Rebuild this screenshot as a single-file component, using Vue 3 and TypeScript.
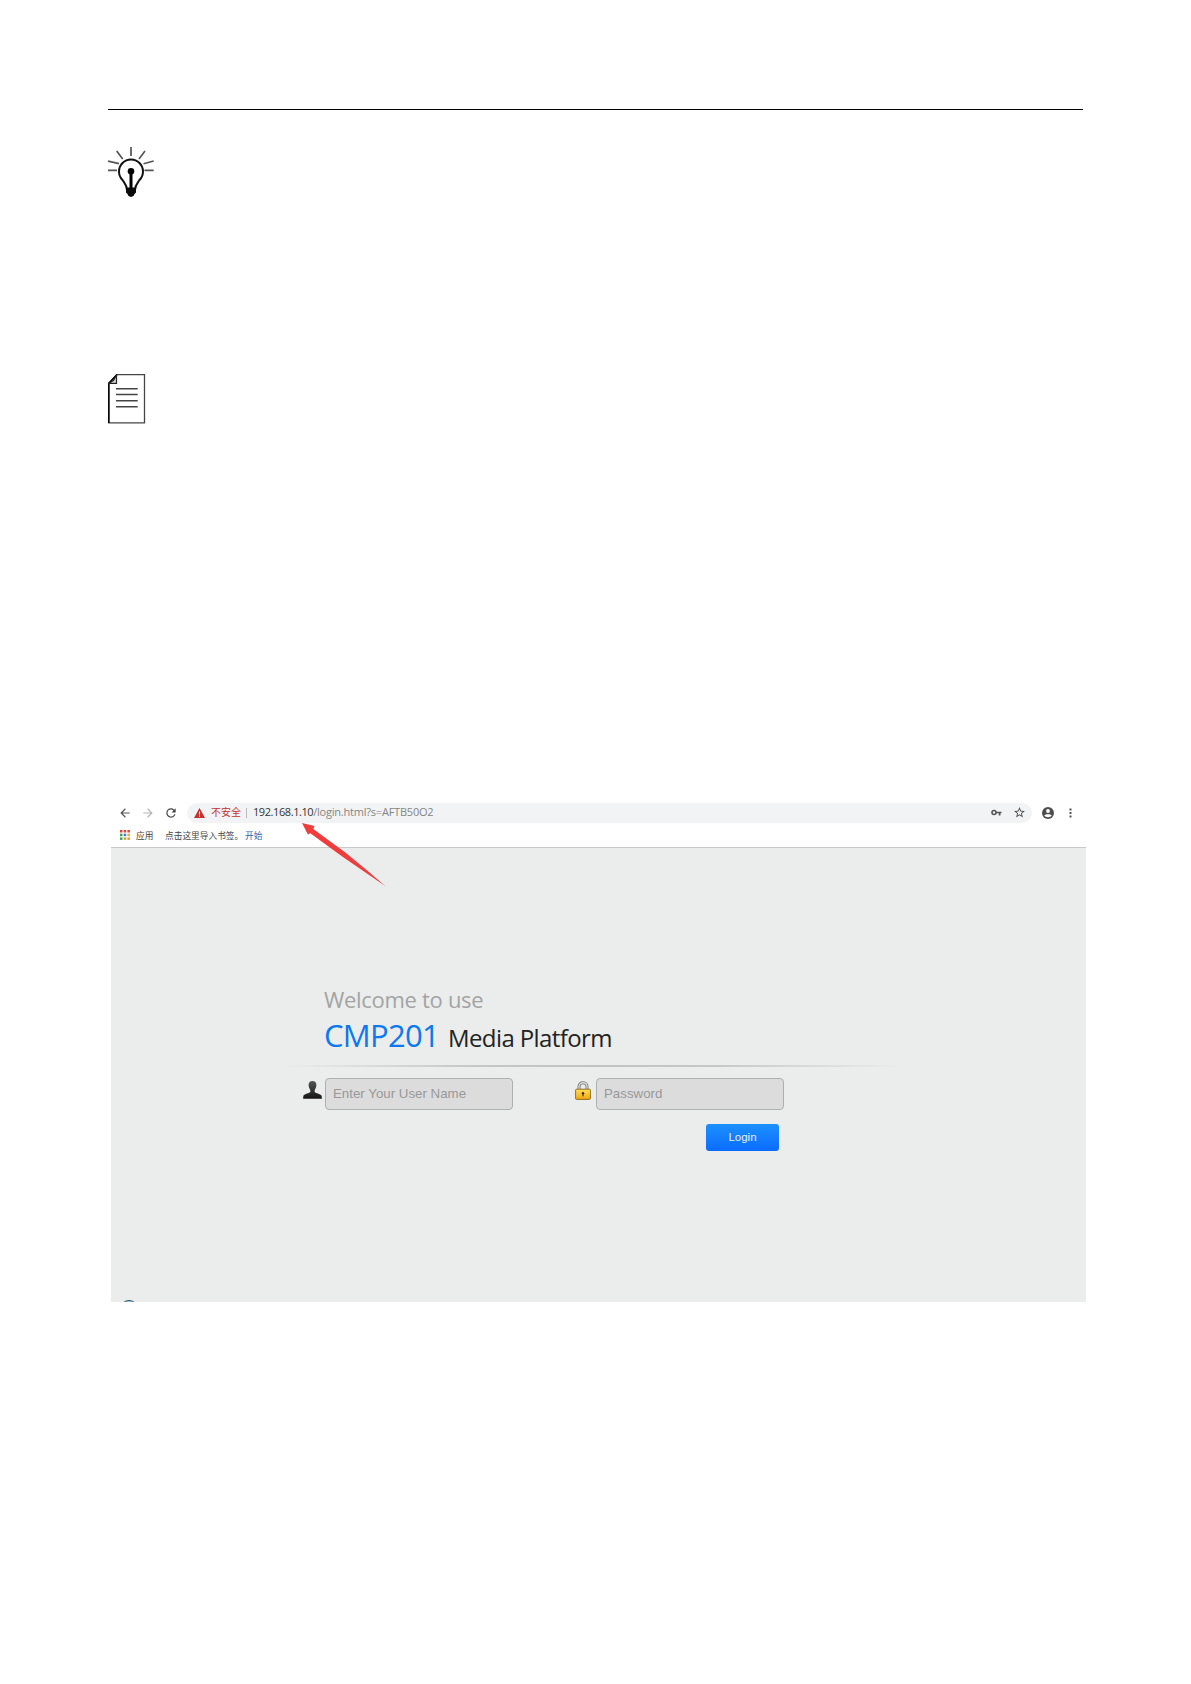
<script setup lang="ts">
import { ref } from 'vue'

const username = ref('')
const password = ref('')
const host = '192.168.1.10'
const path = '/login.html?s=AFTB50O2'

const appColors = [
  '#e0473c', '#e0473c', '#e0473c',
  '#3f9f58', '#4179d8', '#e0b030',
  '#3f9f58', '#d8a030', '#d8a030'
]
</script>

<template>
  <div class="page">
    <div class="rule"></div>

    <svg class="icon-tip" viewBox="0 0 46 50" fill="none">
      <g stroke="#555" stroke-width="1.7">
        <path d="M23 0v9M8.7 4l6 8M37 4l-6 8M0 14l11 2.7M45.7 14l-10.2 2.8M0 23.3h9M36.5 23.3h9.2" />
      </g>
      <path d="M19 43c0-5-2.500-7-4.500-10A12 12 0 1 1 31.500 33C29.500 36 27 38 27 43" stroke="#111" stroke-width="2" />
      <circle cx="23" cy="24.300" r="3.300" fill="#000" />
      <path d="M23 24v18" stroke="#000" stroke-width="3" />
      <path d="M18 40.500h10v5l-1.500 1.500-1 2-2.500 1-2.500-1-1-2-1.500-1.500z" fill="#0a0a0a" />
    </svg>

    <svg class="icon-note" viewBox="0 0 38 50" fill="none">
      <path d="M9 .6H36.500V48.900H.8V9.300z" stroke="#444" stroke-width="1.300" />
      <path d="M.8 48.900V9.300L9 .6" stroke="#000" stroke-width="1.500" />
      <path d="M.8 9.300H8.500V.8L5.700 6.300z" fill="#ddd" stroke="#222" stroke-width="1.200" />
      <path d="M8 14.700h21.700M8 20.500h21.700M8 26.700h21.700M8 32.700h21.700" stroke="#444" stroke-width="1.600" />
    </svg>

    <div class="browser">
      <div class="toolbar">
        <svg class="nav-icon" viewBox="0 0 24 24" fill="#555">
          <path d="M20 11H7.830l5.590-5.590L12 4l-8 8 8 8 1.410-1.410L7.830 13H20z" />
        </svg>
        <svg class="nav-icon" viewBox="0 0 24 24" fill="#b5b5b5">
          <path d="M4 11h12.170l-5.590-5.590L12 4l8 8-8 8-1.410-1.410L16.170 13H4z" />
        </svg>
        <svg class="nav-icon" viewBox="0 0 24 24" fill="#444">
          <path d="M17.650 6.350A8 8 0 1 0 19.730 14h-2.080A6 6 0 1 1 12 6c1.660 0 3.140.69 4.220 1.780L13 11h7V4z" />
        </svg>
        <div class="address">
          <svg class="warn" viewBox="0 0 11 10">
            <path d="M5.500 0L11 10H0z" fill="#c5302c" />
            <path d="M5.500 3.500v3M5.500 7.500v1.200" stroke="#fff" stroke-width="1.100" />
          </svg>
          <span class="unsafe">不安全</span>
          <span class="sep"></span>
          <span class="host">{{ host }}</span><span class="path">{{ path }}</span>
          <svg class="key" viewBox="0 0 11 8">
            <circle cx="3" cy="3.500" r="2" fill="none" stroke="#555" stroke-width="1.600" />
            <path d="M5 3.500h5.500M8.600 3.500v3" stroke="#555" stroke-width="1.700" fill="none" />
          </svg>
          <svg class="star" viewBox="0 0 24 24" fill="#4a4a4a">
            <path d="M22 9.240l-7.190-.62L12 2 9.190 8.630 2 9.240l5.460 4.730L5.820 21 12 17.270 18.180 21l-1.630-7.030zM12 15.400l-3.760 2.270 1-4.280-3.320-2.880 4.380-.38L12 6.100l1.710 4.040 4.380.38-3.320 2.880 1 4.280z" />
          </svg>
        </div>
        <svg class="avatar" viewBox="0 0 12 12">
          <circle cx="6" cy="6" r="6" fill="#4d4d4d" />
          <circle cx="6" cy="4" r="1.900" fill="#fff" />
          <path d="M2.300 8.600C3.600 6.700 8.400 6.700 9.700 8.600 8.300 10.800 3.700 10.800 2.300 8.600z" fill="#fff" />
        </svg>
        <svg class="more" viewBox="0 0 3 10" fill="#555">
          <path d="M.5.5h2v2h-2zM.5 4h2v2h-2zM.5 7.500h2v2h-2z" />
        </svg>
      </div>

      <div class="bookmarks">
        <svg class="apps" viewBox="0 0 10 10">
          <rect
            v-for="(color, i) in appColors"
            :key="i"
            :x="(i % 3) * 3.7"
            :y="Math.floor(i / 3) * 3.7"
            width="2.5"
            height="2.5"
            :fill="color"
          />
        </svg>
        <span class="apps-label">应用</span>
        <span class="hint">点击这里导入书签。</span>
        <a class="start">开始</a>
      </div>

      <div class="viewport">
        <div class="login">
          <div class="welcome">Welcome to use</div>
          <div class="title"><span class="model">CMP201</span><span class="product">Media Platform</span></div>
          <div class="divider"></div>
          <div class="fields">
            <svg class="user" viewBox="0 0 19 18">
              <defs>
                <linearGradient id="person" x1="0" y1="0" x2="0" y2="1">
                  <stop offset="0" stop-color="#555" />
                  <stop offset="1" stop-color="#151515" />
                </linearGradient>
              </defs>
              <path d="M9.500 0C12 0 13.500 1.500 13.400 4.300 13.300 6.500 12.400 8 11.700 9v2c1.300 1.500 6.500 1.700 7 4.200l.2 2.600H.1l.2-2.600C.8 12.700 6 12.500 7.300 11V9C6.600 8 5.700 6.500 5.600 4.300 5.500 1.500 7 0 9.500 0z" fill="url(#person)" />
            </svg>
            <input v-model="username" type="text" placeholder="Enter Your User Name">
            <svg class="lock" viewBox="0 0 16 19">
              <defs>
                <linearGradient id="gold" x1="0" y1="0" x2="0" y2="1">
                  <stop offset="0" stop-color="#ffe05a" />
                  <stop offset="1" stop-color="#f0a514" />
                </linearGradient>
              </defs>
              <path d="M4 9V5.500C4 .5 12 .5 12 5.500V9" fill="none" stroke="#777" stroke-width="3" />
              <path d="M4 9V5.500C4 .5 12 .5 12 5.500V9" fill="none" stroke="#ddd" stroke-width="1.300" />
              <rect x=".6" y="8.200" width="14.800" height="10.200" rx="1" fill="url(#gold)" stroke="#94711f" />
              <circle cx="8" cy="12.300" r="1.200" fill="#402c00" />
              <path d="M8 12v3.300" stroke="#402c00" stroke-width="1.100" />
            </svg>
            <input v-model="password" type="password" placeholder="Password">
          </div>
          <button class="login-btn">Login</button>
        </div>
        <div class="bubble"></div>
      </div>

      <svg class="arrow" viewBox="0 0 84 64">
        <path d="M0 0L12.500 3 11.300 6 43 29.200 64 46.500 83.500 63.300 62 48.500 39.500 33 8.300 10.300 5.900 11.500z" fill="#f03c3c" />
      </svg>
    </div>
  </div>
</template>

<style>
body {
  margin: 0;
  background: #fff;
}
</style>

<style scoped>
.page {
  box-sizing: border-box;
  width: 1191px;
  height: 1684px;
  padding: 109px 105px 0 108px;
  overflow: hidden;
  background: #fff;
  font-family: "Open Sans", "Noto Sans CJK SC", sans-serif;
}
.page svg {
  display: block;
  flex: none;
}
.rule {
  width: 975px;
  height: 1px;
  background: #000;
}
.icon-tip {
  width: 46px;
  height: 50px;
  margin-top: 37px;
}
.icon-note {
  width: 38px;
  height: 50px;
  margin-top: 177px;
}
.browser {
  position: relative;
  width: 975px;
  margin: 375px 0 0 3px;
}
.toolbar {
  display: flex;
  align-items: center;
  height: 27px;
  padding-left: 7px;
}
.nav-icon {
  width: 14px;
  height: 14px;
  margin-right: 9px;
}
.address {
  display: flex;
  align-items: center;
  box-sizing: border-box;
  width: 845px;
  height: 20px;
  padding: 0 6px 0 7px;
  border-radius: 10px;
  background: #f1f3f4;
  font-size: 11px;
  white-space: nowrap;
}
.warn {
  width: 11px;
  height: 10px;
}
.unsafe {
  width: 30px;
  margin-left: 6px;
  padding-bottom: 2px;
  color: #c5302c;
  font-size: 10px;
}
.sep {
  width: 1px;
  height: 10px;
  margin: 0 6px 0 5px;
  background: #bbb;
}
.host,
.path {
  padding-bottom: 2px;
}
.host {
  color: #333;
  letter-spacing: -0.42px;
}
.path {
  color: #858585;
  letter-spacing: -0.22px;
}
.key {
  width: 11px;
  height: 8px;
  margin-left: auto;
}
.star {
  width: 13px;
  height: 13px;
  margin-left: 11px;
}
.avatar {
  width: 12px;
  height: 12px;
  margin-left: 10px;
}
.more {
  width: 3px;
  height: 10px;
  margin-left: 15px;
}
.bookmarks {
  display: flex;
  align-items: center;
  box-sizing: border-box;
  height: 22px;
  padding: 0 0 3px 9px;
  border-bottom: 1px solid #c8caca;
  color: #444;
  font-size: 8.7px;
  white-space: nowrap;
}
.apps {
  width: 10px;
  height: 10px;
}
.apps-label {
  width: 18px;
  margin-left: 6px;
}
.hint {
  width: 80px;
  margin-left: 11px;
}
.start {
  color: #2a63a8;
}
.viewport {
  position: relative;
  box-sizing: border-box;
  height: 454px;
  padding: 136px 0 0 172px;
  overflow: hidden;
  background: #ebedec;
}
.login {
  width: 620px;
}
.welcome {
  height: 31px;
  padding-left: 41px;
  color: #a2a4a3;
  font-size: 22px;
  line-height: 30px;
  letter-spacing: -0.3px;
}
.title {
  display: flex;
  align-items: baseline;
  height: 40px;
  padding-left: 41px;
  line-height: 40px;
  white-space: nowrap;
}
.model {
  width: 124px;
  color: #0e78f0;
  font-size: 31px;
  letter-spacing: -0.7px;
}
.product {
  color: #222;
  font-size: 24px;
  letter-spacing: -0.6px;
}
.divider {
  height: 2px;
  margin-top: 10px;
  background: linear-gradient(90deg, transparent, #c6c8c7 30%, #c0c2c1 50%, #c6c8c7 70%, transparent);
}
.fields {
  display: flex;
  align-items: flex-start;
  padding: 11px 0 0 20px;
}
.fields input {
  box-sizing: border-box;
  width: 188px;
  height: 32px;
  padding: 0 7px 2px;
  border: 1px solid #aeb0b0;
  border-radius: 4px;
  outline: none;
  background: #dcdcdc;
  font: 13.3px "Liberation Sans", sans-serif;
}
.fields input::placeholder {
  color: #989898;
  opacity: 1;
}
.user {
  width: 19px;
  height: 18px;
  margin: 3px 3px 0 0;
}
.lock {
  width: 16px;
  height: 19px;
  margin: 3px 5px 0 62px;
}
.login-btn {
  display: block;
  width: 73px;
  height: 27px;
  margin: 14px 0 0 423px;
  padding: 0 0 2px;
  border: 0;
  border-radius: 3px;
  background: linear-gradient(#1c90ff, #0b6cff);
  color: #e6f1ff;
  font: 11.5px "Liberation Sans", sans-serif;
}
.bubble {
  position: absolute;
  left: 9px;
  bottom: -16px;
  width: 16px;
  height: 16px;
  border: 1px solid #2c566f;
  border-radius: 50%;
  background: #a9c6d8;
}
.arrow {
  position: absolute;
  left: 191px;
  top: 24px;
  width: 84px;
  height: 64px;
}
</style>
